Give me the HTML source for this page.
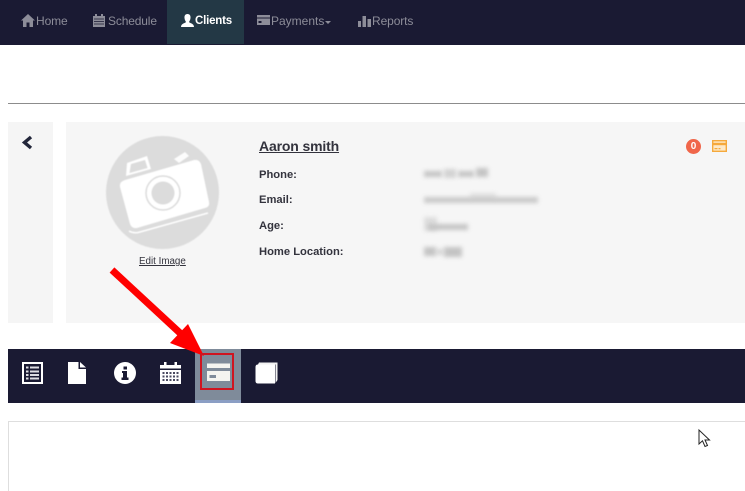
<!DOCTYPE html>
<html><head><meta charset="utf-8">
<style>
html,body{margin:0;padding:0;background:#fff}
body{width:745px;height:491px;position:relative;overflow:hidden;font-family:"Liberation Sans",sans-serif}
.a{position:absolute}
.nav{left:0;top:0;width:745px;height:45px;background:#1a1a33}
.t{position:absolute;top:14px;font-size:12px;line-height:15px;color:#8d8d99;white-space:nowrap}
.lb{position:absolute;left:259px;font-size:11.2px;line-height:14px;font-weight:bold;color:#33333d;white-space:nowrap}
.bl{position:absolute;background:#c4c4c4;filter:blur(2px)}
svg{position:absolute;overflow:visible}
</style></head><body>
<div class="a nav"></div>
<div class="a" style="left:167px;top:0;width:77px;height:44px;background:#233845"></div>

<svg style="left:21px;top:14px" width="14" height="13" viewBox="0 0 14 13"><path d="M7 0L0 6.500h2V13h3.500V8.500h3V13H12V6.500h2z" fill="#8d8d99"/></svg>
<div class="t" style="left:36px;letter-spacing:-.1px">Home</div>
<svg style="left:93px;top:14px" width="12" height="13" viewBox="0 0 12 13"><path d="M0 2h12v11H0z" fill="#8d8d99"/><path d="M2 0h2v3H2zM8 0h2v3H8z" fill="#8d8d99"/><path d="M1 5h10M1 7.500h10M1 10h10" stroke="#1a1a33" stroke-width=".7"/></svg>
<div class="t" style="left:108px;letter-spacing:-.15px">Schedule</div>
<svg style="left:181px;top:14px" width="13" height="13" viewBox="0 0 13 13"><path d="M6.500 0C9 0 9.700 2 9.500 4 9.300 6 8.500 7 8 8c1 1.300 5 1.500 5 5H0c0-3.500 4-3.700 5-5C4.500 7 3.700 6 3.500 4 3.300 2 4 0 6.500 0z" fill="#fff"/></svg>
<div class="t" style="left:195px;top:14px;color:#fff;font-weight:bold;font-size:11.500px;letter-spacing:-.2px">Clients</div>
<svg style="left:257px;top:15px" width="13" height="10" viewBox="0 0 13 10"><path d="M0 0h13v10H0z" fill="#8d8d99"/><path d="M0 2.500h13v1H0z" fill="#1a1a33"/><path d="M1.500 6h3v2h-3z" fill="#1a1a33"/></svg>
<div class="t" style="left:271px">Payments</div>
<div class="a" style="left:325px;top:21px;width:0;height:0;border:3px solid transparent;border-top-color:#8d8d99"></div>
<svg style="left:358px;top:16px" width="13" height="11" viewBox="0 0 13 11"><path d="M0 5h3v6H0zM4.500 0h3.500v11H4.500zM9.500 3H13v8H9.500z" fill="#8d8d99"/></svg>
<div class="t" style="left:372px;letter-spacing:-.1px">Reports</div>

<div class="a" style="left:8px;top:103px;width:737px;height:1px;background:#8c8c8c"></div>
<div class="a" style="left:8px;top:122px;width:45px;height:201px;background:#f5f5f5"></div>
<div class="a" style="left:66px;top:122px;width:679px;height:201px;background:#f6f6f6"></div>
<svg style="left:21px;top:135px" width="12" height="15" viewBox="0 0 12 15"><path d="M10 2L3.500 7.500l6.500 5.500" fill="none" stroke="#22263a" stroke-width="3.400"/></svg>

<svg style="left:106px;top:136px;filter:blur(.5px)" width="113" height="113" viewBox="0 0 113 113">
<circle cx="56.500" cy="56.500" r="56.500" fill="#dcdcdc"/>
<path d="M19 44L88 24Q93 23 95 28L103 66Q104 71 99 72L31 92Q26 93 24 88L14 51Q13 46 19 44z" fill="#fff"/>
<path d="M23 95Q28 98 34 96L102 77" fill="none" stroke="#fff" stroke-width="1.500"/>
<path d="M21 27L41 20 45 33 20 40z" fill="#fff"/><path d="M25 28L39 24 41.500 32 23.500 37z" fill="#dcdcdc"/>
<path d="M68 23L79 16 83 20 73 27z" fill="#fff" opacity=".9"/>
<circle cx="57" cy="57" r="17" fill="none" stroke="#dcdcdc" stroke-width="1.500"/>
<circle cx="57" cy="57" r="11.500" fill="#dcdcdc"/>
</svg>
<div class="a" style="left:139px;top:256px;font-size:9.800px;line-height:12px;color:#33333d;text-decoration:underline;white-space:nowrap">Edit Image</div>

<div class="a" style="left:259px;top:138px;font-size:14px;line-height:16px;font-weight:bold;color:#33333d;text-decoration:underline;white-space:nowrap;letter-spacing:-.15px">Aaron smith</div>
<div class="lb" style="top:168px">Phone:</div>
<div class="lb" style="top:193px">Email:</div>
<div class="lb" style="top:219px">Age:</div>
<div class="lb" style="top:245px">Home Location:</div>

<div class="bl" style="left:424px;top:171px;width:18px;height:6px"></div>
<div class="bl" style="left:444px;top:169px;width:12px;height:9px;opacity:.7"></div>
<div class="bl" style="left:458px;top:171px;width:16px;height:6px"></div>
<div class="bl" style="left:476px;top:168px;width:12px;height:9px"></div>
<div class="bl" style="left:424px;top:197px;width:114px;height:6px;opacity:.9"></div>
<div class="bl" style="left:470px;top:193px;width:26px;height:6px;opacity:.4"></div>
<div class="bl" style="left:424px;top:217px;width:13px;height:14px;opacity:.5"></div>
<div class="bl" style="left:428px;top:224px;width:40px;height:6px"></div>
<div class="bl" style="left:424px;top:247px;width:12px;height:9px"></div>
<div class="bl" style="left:436px;top:249px;width:8px;height:6px;opacity:.6"></div>
<div class="bl" style="left:444px;top:247px;width:18px;height:10px"></div>

<div class="a" style="left:686px;top:139px;width:15px;height:15px;border-radius:50%;background:#f0664a;color:#fff;font-size:10px;font-weight:bold;line-height:15px;text-align:center">0</div>
<svg style="left:712px;top:140px" width="15" height="12" viewBox="0 0 15 12"><rect x=".7" y=".7" width="13.600" height="10.600" fill="#fde9c8" stroke="#f5a93c" stroke-width="1.400"/><path d="M1 2.800h13v2.400H1z" fill="#f5a93c"/><path d="M2.500 8h3v1.200h-3zM6.500 8h2v1.200h-2z" fill="#f5a93c"/></svg>

<div class="a" style="left:8px;top:349px;width:737px;height:54px;background:#1a1a33"></div>
<div class="a" style="left:195px;top:349px;width:46px;height:54px;background:#7f8b9a"></div>
<div class="a" style="left:195px;top:400px;width:46px;height:3px;background:#8b9ec4"></div>

<svg style="left:22px;top:362px" width="21" height="22" viewBox="0 0 21 22"><path d="M0 0h21v22H0z" fill="#fff"/><path d="M2 2h17v18H2z" fill="#1a1a33"/><path d="M4 4.500h2.500v2H4zM8 4.500h9v2H8zM4 8.500h2.500v2H4zM8 8.500h9v2H8zM4 12h2.500v2H4zM8 12h9v2H8zM4 15.500h2.500v2H4zM8 15.500h9v2H8z" fill="#dcdce2"/></svg>
<svg style="left:68px;top:362px" width="18" height="22" viewBox="0 0 18 22"><path d="M0 0h10.500v7H18v15H0zM12 0l6 5.500h-6z" fill="#fff"/></svg>
<svg style="left:114px;top:362px" width="22" height="22" viewBox="0 0 22 22"><circle cx="11" cy="11" r="11" fill="#fff"/><path d="M9.500 4.500h3.500v3H9.500zM8 9h5v6.500h1.500V18h-7v-2.500H9v-4.500H8z" fill="#1a1a33"/></svg>
<svg style="left:160px;top:362px" width="21" height="22" viewBox="0 0 21 22"><path d="M0 3h21v19H0z" fill="#fff"/><path d="M4 0h2.500v4H4zM14.500 0H17v4h-2.500z" fill="#fff"/><path d="M0 6.500h21v1.500H0z" fill="#1a1a33"/><path d="M2.500 10h2v2h-2zM6 10h2v2H6zM9.500 10h2v2h-2zM13 10h2v2h-2zM16.500 10h2v2h-2zM2.500 13.500h2v2h-2zM6 13.500h2v2H6zM9.500 13.500h2v2h-2zM13 13.500h2v2h-2zM16.500 13.500h2v2h-2zM2.500 17h2v2h-2zM6 17h2v2H6zM9.500 17h2v2h-2zM13 17h2v2h-2zM16.500 17h2v2h-2z" fill="#4a4a60"/></svg>
<svg style="left:207px;top:363px" width="23" height="18" viewBox="0 0 23 18"><path d="M0 .5h23v4.500H0zM0 8h23v10H0z" fill="#f4f4f0"/><path d="M2.500 12h6.500v3H2.500z" fill="#7f8b9a"/></svg>
<svg style="left:255px;top:362px" width="23" height="22" viewBox="0 0 23 22"><path d="M4 0.500H22.500V18L20.500 21V2.500H3z" fill="#f2f2f2"/><path d="M3 2.500h17v19H3Q.5 21.500.5 19V5Q.5 2.500 3 2.500z" fill="#fff"/></svg>

<svg style="left:100px;top:260px" width="120" height="110" viewBox="0 0 120 110"><path d="M12 10L80 73" stroke="#f00" stroke-width="7" fill="none"/><path d="M88 64L104 96 70 83z" fill="#f00"/></svg>
<div class="a" style="left:200px;top:353px;width:30px;height:33px;border:2.500px solid #cf1420"></div>

<div class="a" style="left:8px;top:421px;width:737px;height:70px;border:1px solid #dedede;border-right:0;border-bottom:0;box-sizing:border-box"></div>
<svg style="left:698px;top:429px" width="13" height="19" viewBox="0 0 13 19"><path d="M1 1V15L4.500 11.800 7 17.500 9.500 16.500 7 11H11.500z" fill="#fff" stroke="#222" stroke-width="1"/></svg>
</body></html>
